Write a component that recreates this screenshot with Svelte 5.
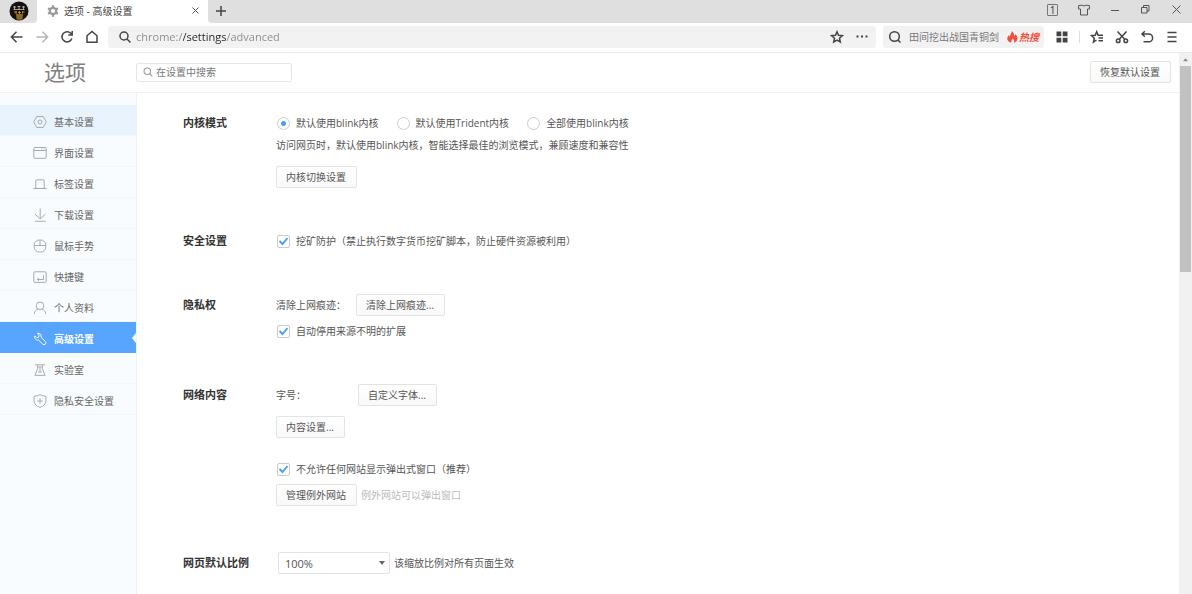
<script lang="ts">
  const navItems = [
    { id: 'basic', label: '基本设置' },
    { id: 'interface', label: '界面设置' },
    { id: 'tabs', label: '标签设置' },
    { id: 'download', label: '下载设置' },
    { id: 'mouse', label: '鼠标手势' },
    { id: 'keys', label: '快捷键' },
    { id: 'profile', label: '个人资料' },
    { id: 'advanced', label: '高级设置' },
    { id: 'lab', label: '实验室' },
    { id: 'privacy', label: '隐私安全设置' },
  ]

  const engines = [
    { value: 'blink', label: '默认使用blink内核' },
    { value: 'trident', label: '默认使用Trident内核' },
    { value: 'all', label: '全部使用blink内核' },
  ]

  let active = $state('advanced')
  let engine = $state('blink')
  let mining = $state(true)
  let extensions = $state(true)
  let popups = $state(true)
  let zoom = $state('100%')
</script>

{#snippet navIcon(id: string)}
  <svg class="nav-icon" viewBox="0 0 14 14" aria-hidden="true">
    {#if id === 'basic'}
      <path d="M3.8 1.5h6.4L13.3 7l-3.1 5.5H3.8L.7 7z" />
      <circle cx="7" cy="7" r="2" />
    {:else if id === 'interface'}
      <rect x=".8" y="1.5" width="12.4" height="10.8" rx="1" />
      <path d="M1 4.5h12M8 3h1M10.5 3h1" />
    {:else if id === 'tabs'}
      <path d="M.3 11.5h13.4M2.8 11.5V4q0-1.2 1.2-1.2h6q1.2 0 1.2 1.2v7.5" />
    {:else if id === 'download'}
      <path d="M7.2.5v10M2 6l5.2 5L12.4 6M1.8 13.3h10.8" />
    {:else if id === 'mouse'}
      <rect x="1.2" y="1" width="11.6" height="12" rx="5" />
      <path d="M1.2 6.5h11.6M7 1v5.5" />
    {:else if id === 'keys'}
      <rect x=".8" y="1.8" width="12.4" height="10.6" rx="1" />
      <path d="M10.5 5.2v4.3h-6M6 7.8 4.2 9.5 6 10.6" />
    {:else if id === 'profile'}
      <circle cx="7" cy="4.8" r="3.8" />
      <path d="M1.2 13.2c.4-3 2-4.4 3.6-4.9M12.8 13.2c-.4-3-2-4.4-3.6-4.9" />
    {:else if id === 'advanced'}
      <path d="M4.5 1.3 6.2 3.2 5.6 5.200 3.500 5.600 1.800 3.900C.9 6.300 3 8.600 5.500 8L9.700 12.100q1.500 1.200 2.700.1 1.200-1.300 0-2.700L8.200 5.400C8.600 2.800 6.800.7 4.500 1.300z" />
    {:else if id === 'lab'}
      <path d="M2 1.800h10M4.600 1.800v3.900L1.900 12.400h10.200L9.400 5.700V1.800M7 4v4.500M5.300 4h3.400M5 9h4" />
    {:else}
      <path d="M7 .7c2 1 4 1.400 5.900 1.500v5c0 3-2.600 5-5.900 6.200C3.700 12.200 1.100 10.200 1.100 7.200v-5C3 2.100 5 1.700 7 .7zM7 4.300v5.400M4.300 7h5.400" />
    {/if}
  </svg>
{/snippet}

<div class="window">
  <div class="tabstrip">
    <button class="account" aria-label="账户">
      <svg width="20" height="20" viewBox="0 0 20 20" aria-hidden="true">
        <circle cx="10" cy="10" r="9.500" fill="#14110f" />
        <path d="M7 13h7l-.5 5.200q-3 1.200-6 0z" fill="#8a6420" />
        <path d="M4 6h3M5.500 5v4M8.500 5.500h3M10 5v4M13 6h3M14.500 5v4M4.500 8.500h11" stroke="#c9c2b4" stroke-width=".8" />
        <path d="M5 11h3M9 11.500h3M13 11h2.500M7 10v3M10.500 10v3M13.500 10.500v2" stroke="#c4953a" stroke-width=".9" />
      </svg>
    </button>
    <div class="tab">
      <svg width="12" height="12" viewBox="0 0 12 12" aria-hidden="true">
        <circle cx="6" cy="6" r="3.200" stroke="#999" stroke-width="2.200" />
        <path d="M6 .3v2M6 9.700v2M1.100 3.200l1.700 1M9.200 7.800l1.700 1M1.100 8.800l1.700-1M9.200 4.200l1.700-1" stroke="#999" stroke-width="2.200" />
      </svg>
      <span class="tab-title">选项 - 高级设置</span>
      <button class="tab-close" aria-label="关闭标签页">
        <svg width="7" height="7" viewBox="0 0 7 7" aria-hidden="true"><path d="m.5.5 6 6m0-6-6 6" /></svg>
      </button>
    </div>
    <div class="strip-rest">
      <button class="new-tab" aria-label="新标签页">
        <svg width="10" height="10" viewBox="0 0 10 10" aria-hidden="true"><path d="M5 0v10M0 5h10" /></svg>
      </button>
      <div class="window-buttons">
        <button aria-label="窗口数量"><span class="count">1</span></button>
        <button aria-label="皮肤">
          <svg width="12" height="12" viewBox="0 0 12 12" aria-hidden="true">
            <path d="M4 1.200q2 1.600 4 0l3.400.3v3.500H9.500v6h-7V5H.6V1.500z" />
          </svg>
        </button>
        <button aria-label="最小化">
          <svg width="8" height="8" viewBox="0 0 8 8" aria-hidden="true"><path d="M0 4.500h8" /></svg>
        </button>
        <button aria-label="还原">
          <svg width="9" height="9" viewBox="0 0 9 9" aria-hidden="true">
            <path d="M.5 2.500h5.500v5.500H.5zM2.500 2.500v-2H8v5.500H6" />
          </svg>
        </button>
        <button aria-label="关闭">
          <svg width="9" height="9" viewBox="0 0 9 9" aria-hidden="true"><path d="m.5.5 8 8m0-8-8 8" /></svg>
        </button>
      </div>
    </div>
  </div>

  <div class="toolbar">
    <button class="tool" aria-label="后退">
      <svg viewBox="0 0 14 14" aria-hidden="true"><path d="M12.500 7h-11M6.500 1.800 1.400 7l5.100 5.200" /></svg>
    </button>
    <button class="tool" aria-label="前进" disabled>
      <svg viewBox="0 0 14 14" aria-hidden="true"><path d="M1.500 7h11M7.500 1.800 12.600 7l-5.100 5.200" /></svg>
    </button>
    <button class="tool" aria-label="刷新">
      <svg viewBox="0 0 14 14" aria-hidden="true"><path d="M11.900 8.500a5.100 5.100 0 1 1-1.100-5.200l1 1.200M12.200 1v4H8.300" /></svg>
    </button>
    <button class="tool" aria-label="主页">
      <svg viewBox="0 0 14 14" aria-hidden="true"><path d="M2 12.300V5.800l5-4.300 5 4.300v6.500z" /></svg>
    </button>

    <div class="address">
      <svg class="lens" viewBox="0 0 14 14" aria-hidden="true"><circle cx="6" cy="6" r="4" /><path d="m9 9 3.500 3.500" /></svg>
      <input class="url" type="text" aria-label="地址栏" value="chrome://settings/advanced" />
      <button class="tool" aria-label="收藏">
        <svg viewBox="0 0 14 14" aria-hidden="true"><path d="m7 1.800 1.500 3.500 3.800.4-2.800 2.500.8 3.800L7 10.100 3.700 12l.8-3.800-2.800-2.500 3.800-.4z" /></svg>
      </button>
      <button class="tool" aria-label="更多">
        <svg viewBox="0 0 14 14" aria-hidden="true"><path d="M1.500 6.500h2M6 6.500h2M10.500 6.500h2" stroke-width="2" /></svg>
      </button>
    </div>

    <div class="quick">
      <svg class="lens" viewBox="0 0 14 14" aria-hidden="true"><circle cx="6.500" cy="6.500" r="4.800" /><path d="m10 10 2.500 2.500" /></svg>
      <input type="text" aria-label="搜索" placeholder="田间挖出战国青铜剑" />
      <a class="hot" href="#hot">
        <svg width="11" height="12" viewBox="0 0 11 12" aria-hidden="true">
          <path d="M4.500 0C7 1.500 7.200 3.500 6.800 5c.8-.3 1.200-1 1.300-1.800C10 4.500 11 6.500 10.300 8.500 9.800 10.300 8.500 11.300 7 11.800c.8-1.800.2-3-1.300-4.300-.2 1.500-2 2.300-1.500 4.300C1.500 11.200 0 9.500.3 7.300.5 5.700 1.300 4.800 2 4c.1.800.4 1.300.9 1.600C3 3.500 4.800 2.500 4.500 0z" />
        </svg>
        热搜
      </a>
    </div>

    <button class="tool" aria-label="应用">
      <svg viewBox="0 0 14 14" aria-hidden="true"><path class="solid" d="M1.500 1.500h4.800v4.800H1.500zM7.700 1.500h4.800v4.800H7.700zM1.500 7.700h4.800v4.800H1.500zM7.700 7.700h4.800v4.800H7.700z" /></svg>
    </button>
    <span class="divider"></span>
    <button class="tool" aria-label="收藏夹">
      <svg viewBox="0 0 14 14" aria-hidden="true"><path d="M6.500 10 3.500 12l.8-3.800L1.500 5.700l3.700-.4 1.500-3.500 1.400 3.500h4.900M8.500 8h4.500M8.500 10.700h4.500" /></svg>
    </button>
    <button class="tool" aria-label="截图">
      <svg viewBox="0 0 14 14" aria-hidden="true"><circle cx="3.200" cy="10.800" r="1.800" /><circle cx="10.800" cy="10.800" r="1.800" /><path d="M2.500 1.500 9.700 9.300M11.500 1.500 4.300 9.300" /></svg>
    </button>
    <button class="tool" aria-label="恢复">
      <svg viewBox="0 0 14 14" aria-hidden="true"><path d="M4.800 1.300 2 4l2.800 2.700M2 4h6.700a3.900 3.900 0 0 1 0 7.800H3.500" /></svg>
    </button>
    <button class="tool" aria-label="菜单">
      <svg viewBox="0 0 14 14" aria-hidden="true"><path d="M2.500 2.500h9M2.500 7h9M2.500 11.500h9" /></svg>
    </button>
  </div>

  <div class="page">
    <div class="document">
      <header>
        <h1>选项</h1>
        <label class="search">
          <svg class="lens" viewBox="0 0 14 14" aria-hidden="true"><circle cx="6" cy="6" r="4.500" /><path d="m9.500 9.500 3.500 3.500" /></svg>
          <input type="text" aria-label="在设置中搜索" placeholder="在设置中搜索" />
        </label>
        <button class="btn">恢复默认设置</button>
      </header>

      <div class="body">
        <nav>
          {#each navItems as item (item.id)}
            <a
              href="#{item.id}"
              class:hover={item.id === 'basic'}
              class:active={active === item.id}
              onclick={() => (active = item.id)}
            >
              {@render navIcon(item.id)}
              {item.label}
            </a>
          {/each}
        </nav>

        <main>
          <section>
            <h2>内核模式</h2>
            <div class="fields">
              <div class="row radios">
                {#each engines as option (option.value)}
                  <label>
                    <input type="radio" name="engine" value={option.value} bind:group={engine} />
                    {option.label}
                  </label>
                {/each}
              </div>
              <p class="row">访问网页时，默认使用blink内核，智能选择最佳的浏览模式，兼顾速度和兼容性</p>
              <div class="row loose"><button class="btn">内核切换设置</button></div>
            </div>
          </section>

          <section>
            <h2>安全设置</h2>
            <div class="fields">
              <label class="row">
                <input type="checkbox" bind:checked={mining} />
                挖矿防护（禁止执行数字货币挖矿脚本，防止硬件资源被利用）
              </label>
            </div>
          </section>

          <section>
            <h2>隐私权</h2>
            <div class="fields">
              <div class="row">
                <span class="caption">清除上网痕迹：</span>
                <button class="btn">清除上网痕迹...</button>
              </div>
              <label class="row tight">
                <input type="checkbox" bind:checked={extensions} />
                自动停用来源不明的扩展
              </label>
            </div>
          </section>

          <section>
            <h2>网络内容</h2>
            <div class="fields">
              <div class="row">
                <span class="caption wide">字号：</span>
                <button class="btn">自定义字体...</button>
              </div>
              <div class="row loose"><button class="btn">内容设置...</button></div>
              <label class="row apart">
                <input type="checkbox" bind:checked={popups} />
                不允许任何网站显示弹出式窗口（推荐）
              </label>
              <div class="row tight">
                <button class="btn">管理例外网站</button>
                <span class="hint">例外网站可以弹出窗口</span>
              </div>
            </div>
          </section>

          <section>
            <h2><label for="zoom">网页默认比例</label></h2>
            <div class="fields">
              <div class="row tight">
                <select id="zoom" bind:value={zoom}>
                  <option>75%</option>
                  <option>100%</option>
                  <option>125%</option>
                  <option>150%</option>
                </select>
                <span>该缩放比例对所有页面生效</span>
              </div>
            </div>
          </section>
        </main>
      </div>
    </div>

    <div class="scrollbar" aria-hidden="true">
      <svg width="13" height="13" viewBox="0 0 13 13"><path d="m3.500 8.500 3-3.500 3 3.500z" fill="#8b8b8b" /></svg>
      <div class="thumb"></div>
    </div>
  </div>
</div>

<style>
  :global(body) {
    margin: 0;
    overflow: hidden;
  }

  .window {
    display: flex;
    flex-direction: column;
    height: 100vh;
    background: #fff;
    color: #555;
    font: 10px/22px 'Open Sans', 'Noto Sans CJK SC', sans-serif;
  }

  .window :global(*) {
    box-sizing: border-box;
  }

  button,
  input,
  select {
    margin: 0;
    padding: 0;
    border: 0;
    background: none;
    color: inherit;
    font: inherit;
    outline: none;
  }

  input::placeholder {
    color: #777;
    opacity: 1;
  }

  a {
    color: inherit;
    text-decoration: none;
  }

  svg {
    flex: none;
    fill: none;
    stroke-width: 1;
  }

  /* tab strip */
  .tabstrip {
    display: flex;
    height: 23px;
    background: #fff;
  }

  .account {
    display: flex;
    align-items: center;
    justify-content: center;
    width: 37px;
    padding-bottom: 2px;
    background: #dfdfdf;
    border-bottom-right-radius: 4px;
  }

  .tab {
    display: flex;
    align-items: center;
    width: 171px;
    padding: 0 8px 2px 10px;
    gap: 5px;
    color: #444;
  }

  .tab-title {
    flex: 1;
  }

  .tab-close,
  .new-tab,
  .window-buttons button {
    display: flex;
    align-items: center;
    justify-content: center;
    stroke: #555;
  }

  .tab-close {
    width: 10px;
  }

  .strip-rest {
    display: flex;
    flex: 1;
    justify-content: space-between;
    padding: 0 0 2px 4px;
    background: #dfdfdf;
    border-bottom-left-radius: 4px;
  }

  .new-tab {
    width: 17px;
  }

  .new-tab svg {
    stroke: #444;
    stroke-width: 1.5;
  }

  .window-buttons {
    display: flex;
    height: 19px;
  }

  .window-buttons button {
    width: 31px;
  }

  .count {
    width: 11px;
    height: 12px;
    border: 1px solid #777;
    border-radius: 1px;
    color: #333;
    line-height: 10px;
  }

  /* toolbar */
  .toolbar {
    display: flex;
    align-items: center;
    height: 30px;
    padding: 0 8px 1px 4px;
    border-bottom: 1px solid #e8eaec;
  }

  .tool {
    display: flex;
    align-items: center;
    justify-content: center;
    flex: none;
    width: 25px;
    height: 22px;
    stroke: #444;
  }

  .tool:disabled {
    stroke: #b5b5b5;
  }

  .tool svg,
  .lens {
    width: 14px;
    height: 14px;
    stroke-width: 1.5;
  }

  .tool .solid {
    fill: #444;
    stroke: none;
  }

  .address,
  .quick {
    display: flex;
    align-items: center;
    height: 22px;
    background: #f2f2f2;
    border-radius: 3px;
    stroke: #444;
  }

  .address {
    flex: 1;
    margin: 0 7px 0 4px;
    padding: 0 2px 0 10px;
  }

  /* the host part of the address is darker than the rest */
  .url {
    flex: 1;
    margin-left: 4px;
    background: linear-gradient(90deg, #8a8a8a 47px, #222 47px, #222 91px, #8a8a8a 91px);
    background-clip: text;
    color: transparent;
    font-size: 11px;
  }

  .quick {
    width: 161px;
    margin-right: 5px;
    padding: 0 5px;
    gap: 7px;
  }

  .quick input {
    flex: 1;
    min-width: 0;
  }

  .hot {
    display: flex;
    align-items: center;
    gap: 1px;
    color: #f0503f;
    font-style: italic;
    font-weight: 700;
  }

  .hot svg {
    fill: #f0503f;
    stroke: none;
  }

  .divider {
    width: 1px;
    height: 12px;
    margin: 0 4px 0 5px;
    background: #ddd;
  }

  /* settings page */
  .page {
    display: flex;
    flex: 1;
    min-height: 0;
  }

  .document {
    display: flex;
    flex: 1;
    flex-direction: column;
    min-width: 0;
  }

  header {
    display: flex;
    align-items: center;
    height: 40px;
    padding: 0 8px 1px 0;
    border-bottom: 1px solid #f0f0f0;
  }

  h1 {
    width: 136px;
    margin: 0;
    padding-left: 44px;
    color: #808080;
    font-size: 21px;
    font-weight: 400;
  }

  .search {
    display: flex;
    align-items: center;
    width: 156px;
    height: 19px;
    margin-right: auto;
    padding: 0 6px;
    gap: 3px;
    border: 1px solid #e6e6e6;
    border-radius: 2px;
    stroke: #999;
  }

  .search .lens {
    width: 10px;
    height: 10px;
  }

  .search input {
    flex: 1;
    min-width: 0;
    height: 17px;
  }

  .btn {
    height: 22px;
    padding: 0 10px 0 9px;
    border: 1px solid #e3e3e3;
    border-radius: 2px;
    background: linear-gradient(#fff, #f9f9f9);
    line-height: 20px;
    white-space: nowrap;
  }

  .body {
    display: flex;
    flex: 1;
    min-height: 0;
  }

  nav {
    width: 137px;
    padding-top: 12px;
    background: #f8fcff;
    border-right: 1px solid #edf1f5;
  }

  nav a {
    position: relative;
    display: flex;
    align-items: center;
    height: 31px;
    padding: 3px 0 0 33px;
    gap: 7px;
    border-bottom: 1px solid #f3f7fb;
    color: #666;
    stroke: #aaa;
  }

  nav a.hover {
    background: #e9f3fe;
  }

  nav a.active {
    border-color: #58a5ff;
    background: #58a5ff;
    color: #fff;
    font-weight: 700;
    stroke: #fff;
  }

  nav a.active::after {
    position: absolute;
    top: 11px;
    right: 0;
    border: 5px solid transparent;
    border-right: 4px solid #fff;
    border-left: 0;
    content: '';
  }

  .nav-icon {
    width: 14px;
    height: 14px;
  }

  main {
    display: flex;
    flex: 1;
    flex-direction: column;
    gap: 42px;
    padding: 19px 20px 0 46px;
    overflow: hidden;
  }

  section {
    display: flex;
    flex: none;
  }

  h2 {
    width: 93px;
    margin: 0;
    color: #333;
    font-size: 11px;
    font-weight: 700;
    line-height: 22px;
  }

  section:last-child h2 {
    padding-top: 4px;
  }

  .row {
    display: flex;
    align-items: center;
    height: 22px;
    margin: 0;
    gap: 4px;
  }

  .row.tight {
    margin-top: 4px;
  }

  .row.loose {
    margin-top: 10px;
  }

  .row.apart {
    margin-top: 20px;
  }

  .radios {
    gap: 17px;
  }

  .radios label {
    display: flex;
    align-items: center;
  }

  .caption {
    width: 76px;
  }

  .caption.wide {
    width: 78px;
  }

  .hint {
    color: #bbb;
  }

  input[type='radio'],
  input[type='checkbox'] {
    flex: none;
    width: 13px;
    height: 13px;
    border: 1px solid #ccc;
    background: #fff center no-repeat;
    appearance: none;
  }

  input[type='radio'] {
    margin: 0 6px 0 1px;
    border-radius: 50%;
  }

  input[type='radio']:checked {
    background-image: radial-gradient(circle, #4d9df5 2px, transparent 3px);
  }

  input[type='checkbox'] {
    margin: 0 2px 0 1px;
    border-radius: 2px;
  }

  input[type='checkbox']:checked {
    background-image: url("data:image/svg+xml,%3Csvg xmlns='http://www.w3.org/2000/svg' width='11' height='11'%3E%3Cpath d='M1.500 5 4.500 8 9.500 2' fill='none' stroke='%234d9df5' stroke-width='1.900'/%3E%3C/svg%3E");
  }

  select {
    width: 112px;
    height: 22px;
    margin-left: 2px;
    padding: 0 6px;
    border: 1px solid #e3e3e3;
    border-radius: 2px;
    background: #fff url("data:image/svg+xml,%3Csvg xmlns='http://www.w3.org/2000/svg' width='6' height='4'%3E%3Cpath d='M0 0h6L3 4z' fill='%23666'/%3E%3C/svg%3E") right 4px center no-repeat;
    font-size: 11px;
    appearance: none;
  }

  .scrollbar {
    width: 13px;
    padding: 0 1px;
    background: #f1f1f1;
  }

  .scrollbar svg {
    display: block;
    width: 11px;
  }

  .thumb {
    height: 38%;
    background: #c1c1c1;
  }
</style>
